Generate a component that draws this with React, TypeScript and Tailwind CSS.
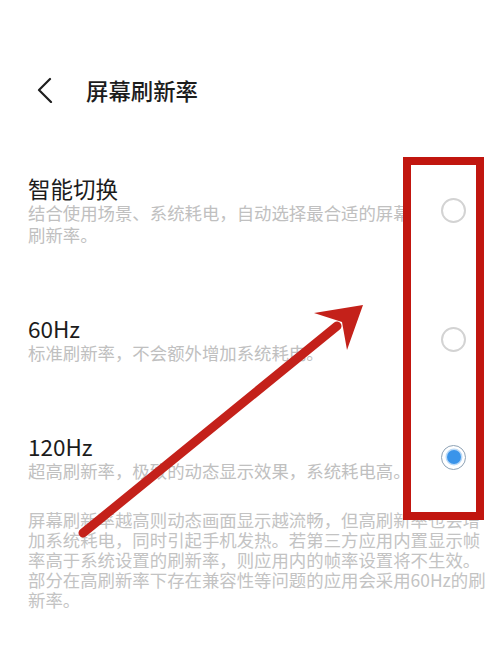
const options = [
  {
    title: '智能切换',
    desc: '结合使用场景、系统耗电，自动选择最合适的屏幕刷新率。',
    selected: false,
  },
  {
    title: '60Hz',
    desc: '标准刷新率，不会额外增加系统耗电。',
    selected: false,
  },
  {
    title: '120Hz',
    desc: '超高刷新率，极致的动态显示效果，系统耗电高。',
    selected: true,
  },
];

const Radio = ({ checked }: { checked: boolean }) =>
  checked ? (
    <div className="relative z-10 flex h-[25px] w-[25px] items-center justify-center rounded-full border-[1.5px] border-[#8ea2b5] bg-white">
      <div className="h-[14px] w-[14px] rounded-full bg-[#3a94ea] shadow-[0_0_0_1.5px_#b9d9f7]" />
    </div>
  ) : (
    <div className="relative z-10 h-[25px] w-[25px] rounded-full border-2 border-[#d3d3d3] bg-white" />
  );

export default function App() {
  return (
    <div
      className="relative h-[655px] w-[500px] overflow-hidden bg-white"
      style={{ fontFamily: '"Noto Sans CJK SC", "Noto Sans", sans-serif' }}
    >
      {/* 顶部栏 */}
      <header className="mt-[75px] flex h-[30px] items-center">
        <svg
          className="ml-[36px]"
          width="18"
          height="26"
          viewBox="0 0 18 26"
          fill="none"
          stroke="#1f1f1f"
          strokeWidth="2.2"
          strokeLinecap="round"
          strokeLinejoin="round"
        >
          <path d="M14 2 L3 13 L15 25" />
        </svg>
        <h1 className="ml-[32px] text-[22.4px] font-medium leading-[30px] text-[#1c1c1c]">
          屏幕刷新率
        </h1>
      </header>

      {/* 选项列表 */}
      <div className="mt-[69px] flex flex-col gap-[68px]">
        {options.map((opt) => (
          <div key={opt.title} className="flex items-center justify-between pl-[28px] pr-[34px]">
            <div className="w-[392px]">
              <div className="text-[22.5px] leading-[28px] text-[#1c1c1c]">{opt.title}</div>
              <div className="text-[17.4px] leading-[22px] text-[#c0c0c0]">{opt.desc}</div>
            </div>
            <Radio checked={opt.selected} />
          </div>
        ))}
      </div>

      <p className="mt-[28px] w-[490px] pl-[28px] text-[17.4px] leading-[20px] text-[#c3c3c3]">
        屏幕刷新率越高则动态画面显示越流畅，但高刷新率也会增加系统耗电，同时引起手机发热。若第三方应用内置显示帧率高于系统设置的刷新率，则应用内的帧率设置将不生效。部分在高刷新率下存在兼容性等问题的应用会采用60Hz的刷新率。
      </p>

      {/* 标注：红框 */}
      <div className="absolute left-[403px] top-[157px] h-[363px] w-[81px] border-[8px] border-[#c1160f] bg-white" />

      {/* 标注：箭头 */}
      <svg
        className="pointer-events-none absolute left-0 top-0 z-20"
        width="500"
        height="655"
        viewBox="0 0 500 655"
      >
        <line x1="83" y1="533" x2="337" y2="326" stroke="#c4211a" strokeWidth="9" strokeLinecap="round" />
        <polygon points="363,305 314,313 342,322 347,350" fill="#c4211a" />
      </svg>
    </div>
  );
}
